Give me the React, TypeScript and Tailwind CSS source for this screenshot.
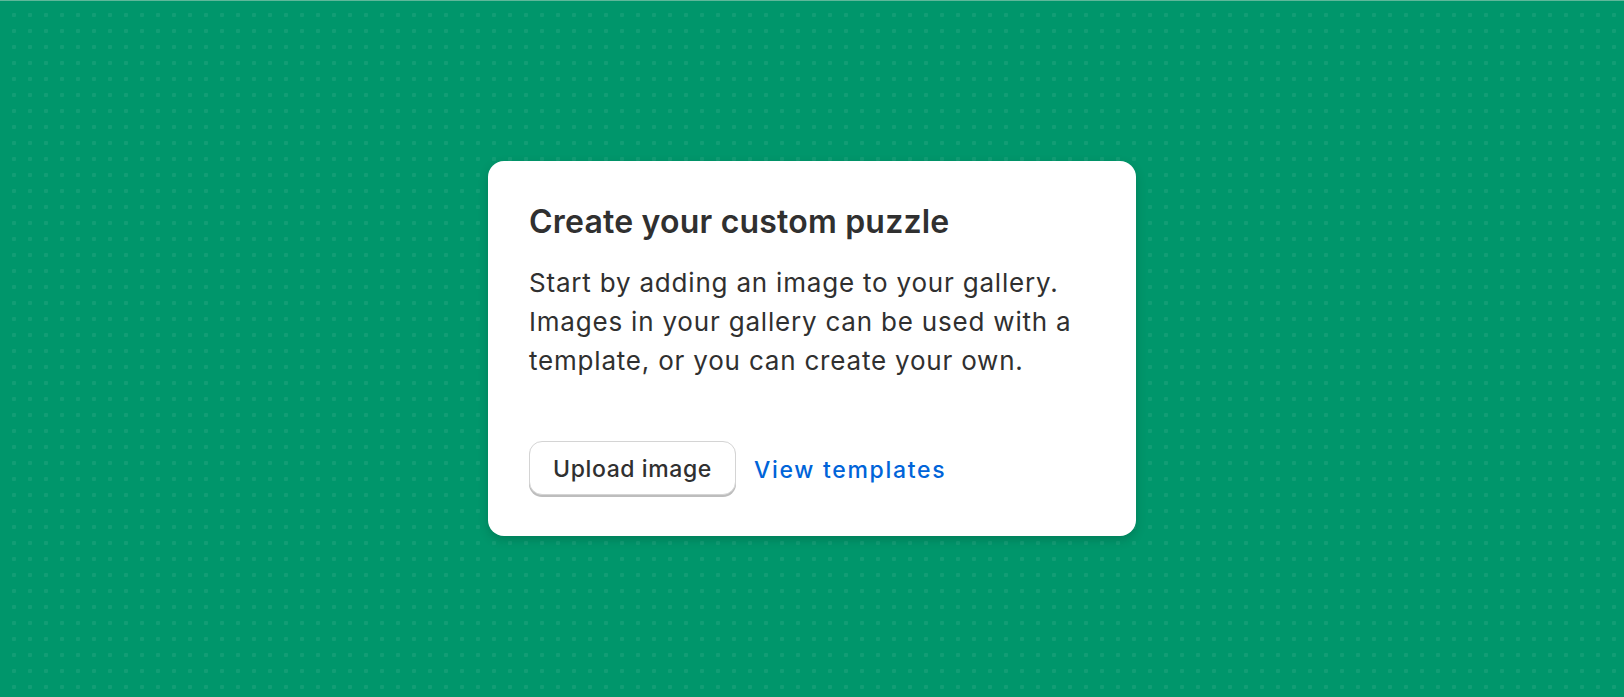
import React from 'react';

export default function App() {
  return (
    <div className="relative h-[697px] w-full overflow-hidden bg-[#00966b] font-['Inter',sans-serif]">
      {/* dotted grid */}
      <div className="pointer-events-none absolute inset-0 bg-[radial-gradient(rgba(255,255,255,0.07)_2px,transparent_2.5px)] bg-[length:16px_16px] bg-[position:6px_7px]" />
      <div className="absolute inset-x-0 top-0 h-px bg-[#5fb79a]" />
      <div className="relative flex h-full items-center justify-center">
        <div className="w-[648px] rounded-[16px] bg-white px-[41px] pb-[41px] pt-[41px] shadow-[0_4px_10px_rgba(0,60,40,0.25)]">
          <h1 className="text-[32px] font-semibold leading-[40px] tracking-[0.2px] text-[#303030]">
            Create your custom puzzle
          </h1>
          <p className="mt-[21px] text-[26px] leading-[39px] tracking-[0.8px] text-[#303030]">
            Start by adding an image to your gallery. Images in your gallery can be used with a template, or you can create your own.
          </p>
          <div className="mt-[61px] flex items-center gap-[18px]">
            <button className="h-[54px] w-[207px] rounded-[13px] border border-[#d4d4d4] bg-white pt-[3px] text-[23px] font-medium tracking-[0.6px] text-[#303030] shadow-[0_2px_0_#bdbdbd]">
              Upload image
            </button>
            <a className="pt-[4px] text-[23px] font-medium tracking-[1.7px] text-[#0064d9]">View templates</a>
          </div>
        </div>
      </div>
    </div>
  );
}
